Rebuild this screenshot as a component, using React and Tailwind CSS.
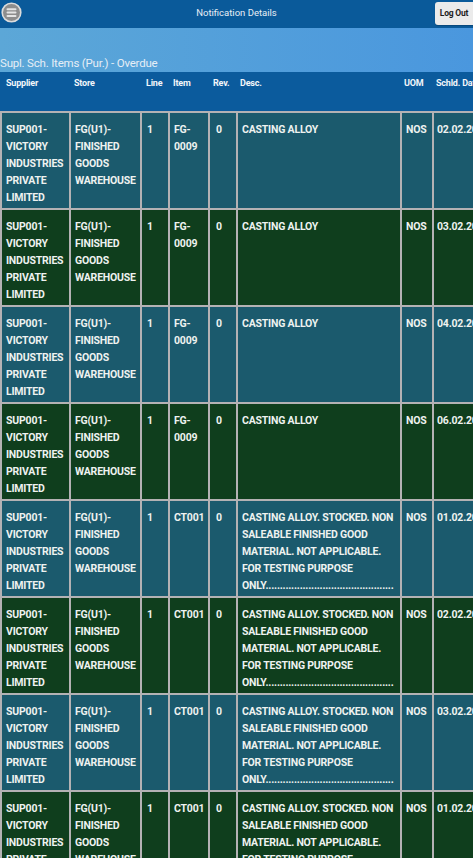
import React from "react";

const COLS = "grid grid-cols-[69px_71px_28px_40px_28px_164px_32px_80px] w-[512px]";

const LONG = [
  "CASTING ALLOY. STOCKED. NON",
  "SALEABLE FINISHED GOOD",
  "MATERIAL. NOT APPLICABLE.",
  "FOR TESTING PURPOSE",
  "ONLY.............................................",
];

const rows = [
  { item: ["FG-", "0009"], desc: ["CASTING ALLOY"], date: "02.02.2018" },
  { item: ["FG-", "0009"], desc: ["CASTING ALLOY"], date: "03.02.2018" },
  { item: ["FG-", "0009"], desc: ["CASTING ALLOY"], date: "04.02.2018" },
  { item: ["FG-", "0009"], desc: ["CASTING ALLOY"], date: "06.02.2018" },
  { item: ["CT001"], desc: LONG, date: "01.02.2018" },
  { item: ["CT001"], desc: LONG, date: "02.02.2018" },
  { item: ["CT001"], desc: LONG, date: "03.02.2018" },
  { item: ["CT001"], desc: LONG, date: "01.02.2018" },
];

const supplier = ["SUP001-", "VICTORY", "INDUSTRIES", "PRIVATE", "LIMITED"];
const store = ["FG(U1)-", "FINISHED", "GOODS", "WAREHOUSE"];

function Cell({ lines, pad = "pl-[4px]" }) {
  return (
    <div className={`border-l-2 border-b-2 border-[#b4b2b4] pt-[8px] pb-[2px] pr-[2px] overflow-hidden ${pad}`}>
      {lines.map((l, i) => (
        <div key={i} className="whitespace-nowrap leading-[17px] h-[17px]">
          {l}
        </div>
      ))}
    </div>
  );
}

function HeadCell({ children, pad = "pl-[5px]" }) {
  return <div className={`pt-[5px] ${pad} whitespace-nowrap`}>{children}</div>;
}

export default function App() {
  return (
    <div className="w-[473px] h-[858px] overflow-hidden bg-[#0b5b9d] font-['Roboto',sans-serif]">
      {/* top bar */}
      <div className="relative h-[28px] bg-[#0a5a9a] flex items-center justify-center">
        <div className="absolute left-[1px] top-[2px]">
          <svg width="21" height="21" viewBox="0 0 21 21">
            <circle cx="10.5" cy="10.5" r="9.3" fill="#8d8d8d" stroke="#dcdcdc" strokeWidth="1.6" />
            <rect x="5.5" y="6.3" width="10" height="2" rx="1" fill="#e4e4e4" />
            <rect x="5.5" y="9.6" width="10" height="2" rx="1" fill="#e4e4e4" />
            <rect x="5.5" y="12.9" width="10" height="2" rx="1" fill="#e4e4e4" />
          </svg>
        </div>
        <span className="text-[9.5px] text-[#e8eef6] -mt-[1px]">Notification Details</span>
        <div className="absolute right-0 top-[2px] h-[23px] w-[38px] bg-[#ebebeb] rounded-l-[3px] flex items-center justify-center shadow-[0_1px_1px_rgba(0,0,0,0.2)]">
          <span className="text-[8.5px] font-bold text-[#1c1c1c] tracking-[-0.2px]">Log Out</span>
        </div>
      </div>

      {/* band */}
      <div className="h-[44px] bg-gradient-to-r from-[#5ca7d7] to-[#4a97de] flex items-end pb-[3px]">
        <span className="text-[11.5px] text-[#e6eef6] leading-none tracking-[-0.2px]">Supl. Sch. Items (Pur.) - Overdue</span>
      </div>

      {/* table header */}
      <div className={`${COLS} h-[39px] bg-[#0b5b9d] text-[9px] font-bold text-[#f2f6fa] tracking-[-0.2px]`}>
        <HeadCell pad="pl-[6px]">Supplier</HeadCell>
        <HeadCell pad="pl-[5px]">Store</HeadCell>
        <HeadCell pad="pl-[6px]">Line</HeadCell>
        <HeadCell pad="pl-[5px]">Item</HeadCell>
        <HeadCell pad="pl-[5px]">Rev.</HeadCell>
        <HeadCell pad="pl-[4px]">Desc.</HeadCell>
        <HeadCell pad="pl-[4px]">UOM</HeadCell>
        <HeadCell pad="pl-[4px]">Schld. Date</HeadCell>
      </div>

      {/* rows */}
      <div className="border-t-2 border-[#b4b2b4] w-[512px]">
        {rows.map((r, i) => (
          <div
            key={i}
            className={`${COLS} text-[10.5px] font-bold text-[#eef2f0] tracking-[-0.2px] ${
              i % 2 === 0 ? "bg-[#1b5a6d]" : "bg-[#0f3e1d]"
            }`}
          >
            <Cell lines={supplier} />
            <Cell lines={store} />
            <Cell lines={["1"]} pad="pl-[5px]" />
            <Cell lines={r.item} />
            <Cell lines={["0"]} pad="pl-[6px]" />
            <Cell lines={r.desc} />
            <Cell lines={["NOS"]} />
            <Cell lines={[r.date]} pad="pl-[3px]" />
          </div>
        ))}
      </div>
    </div>
  );
}
